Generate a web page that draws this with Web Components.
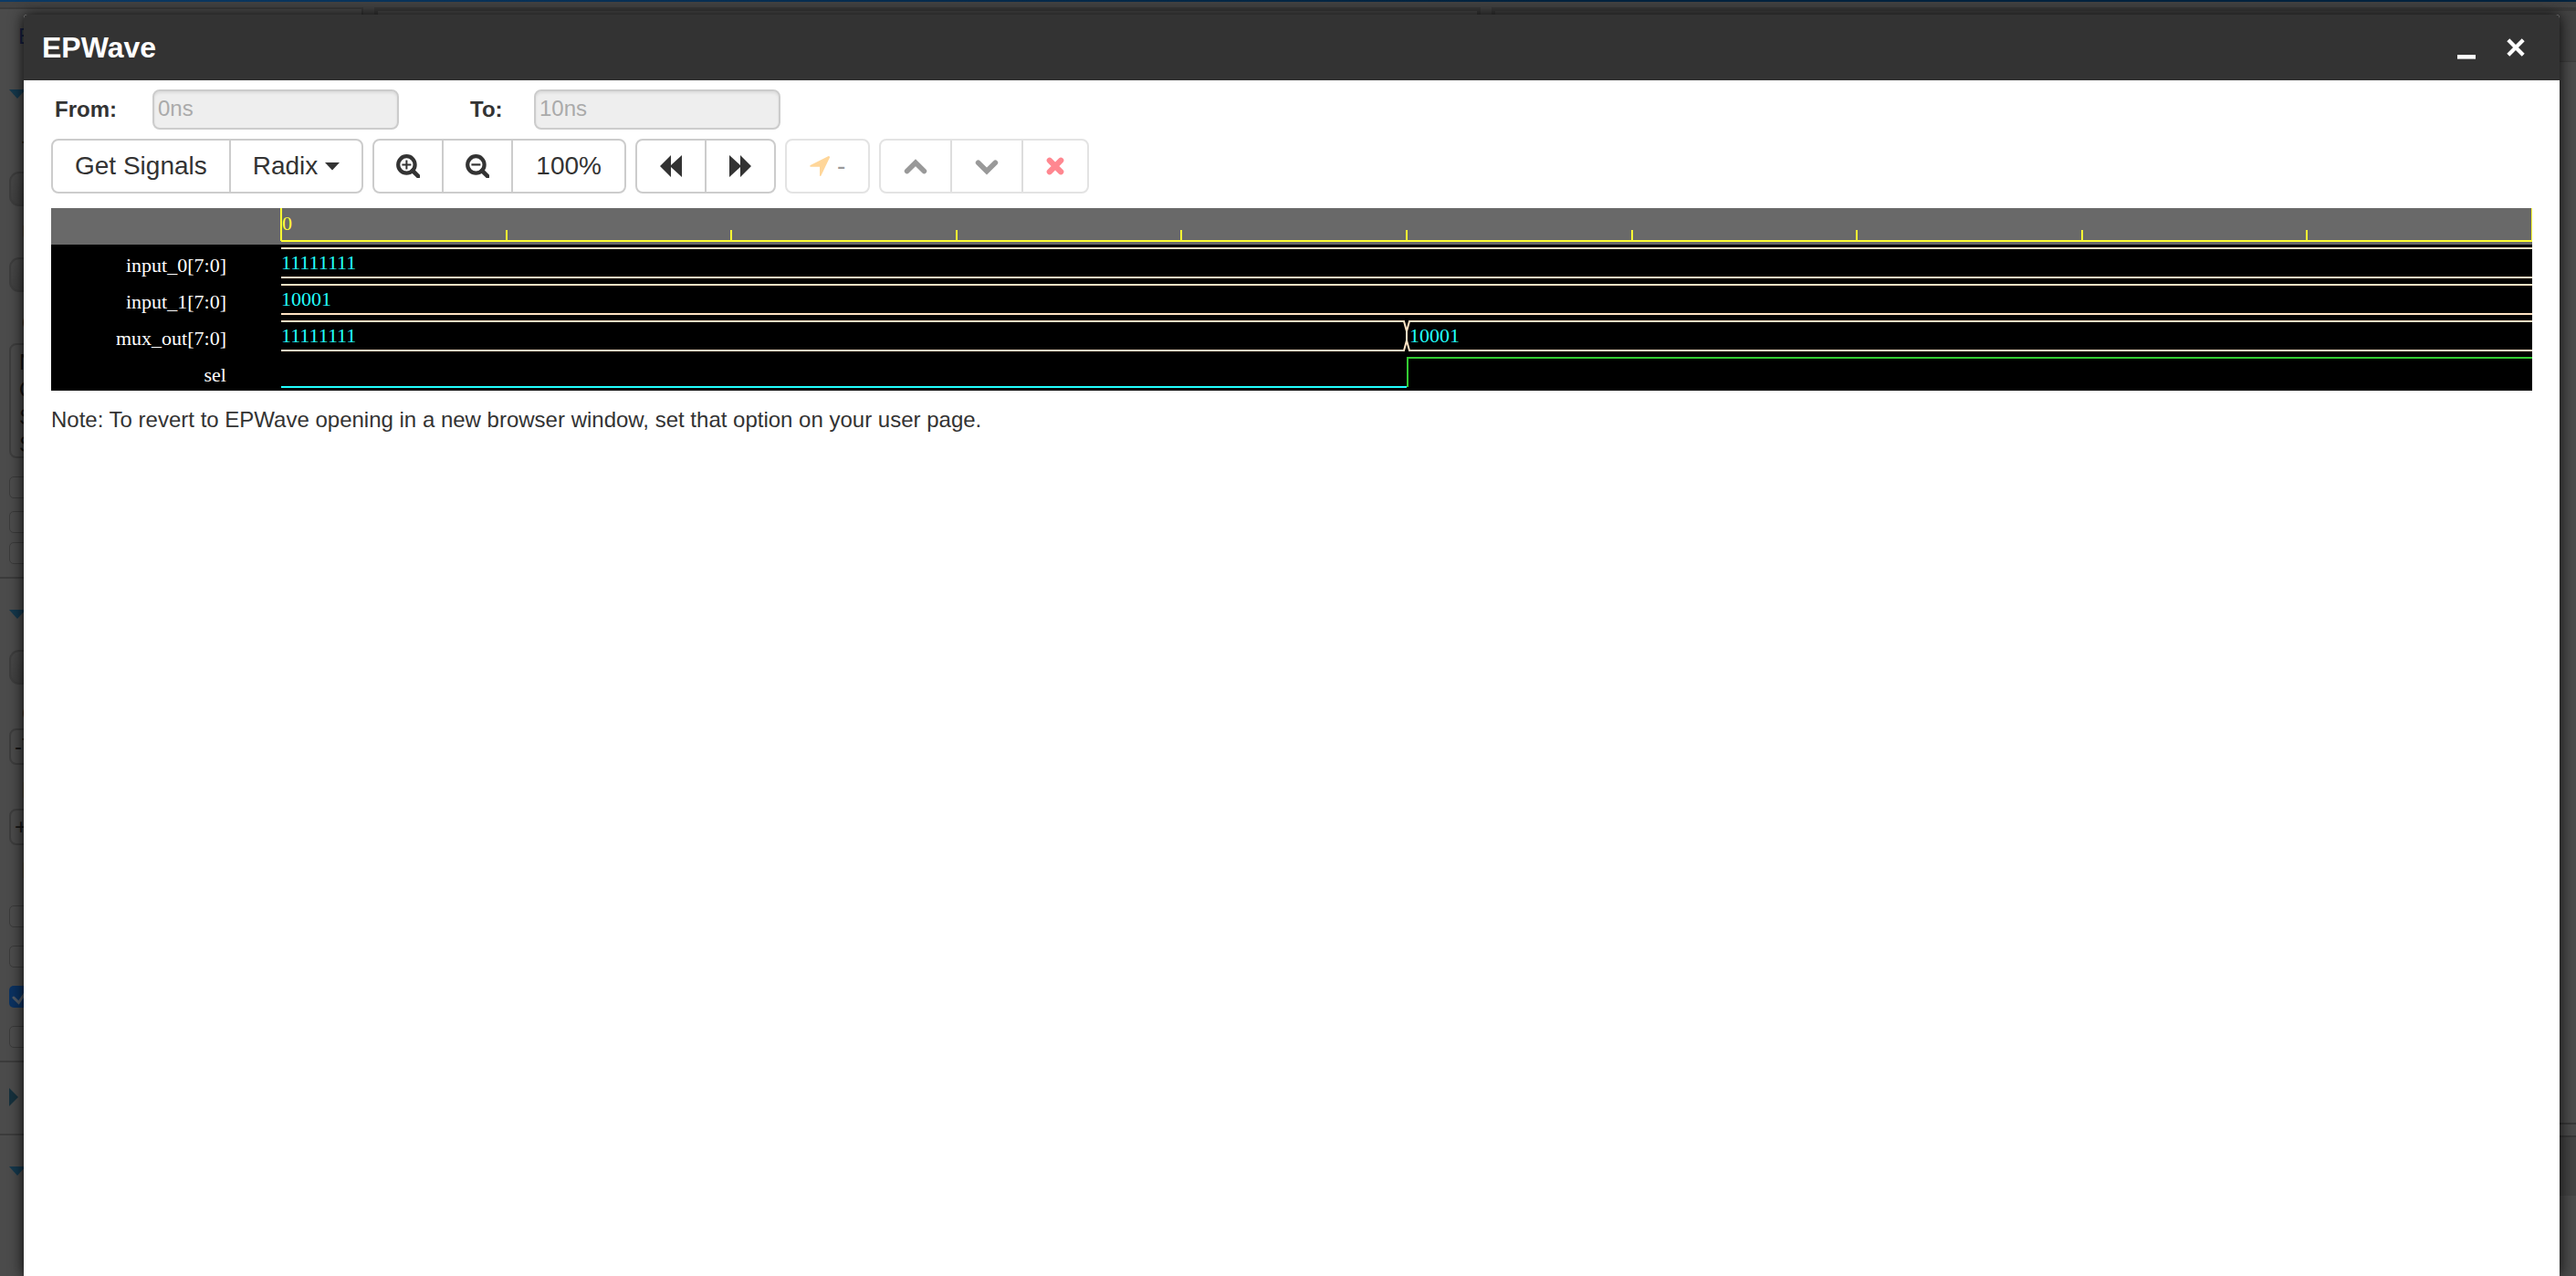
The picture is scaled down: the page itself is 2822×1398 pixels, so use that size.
<!DOCTYPE html>
<html lang="en">
<head>
<meta charset="utf-8">
<title>EPWave</title>
<style>
  body { margin: 0; background: #4b4b4b; color: #333; font: 24px/40px "Liberation Sans", Arial, sans-serif; }
</style>
</head>
<body>
<ep-app></ep-app>
<script>
const define = (name, html, setup) => customElements.define(name, class extends HTMLElement {
  connectedCallback() {
    if (this.shadowRoot) return;
    const root = this.attachShadow({ mode: 'open' });
    const t = document.createElement('template');
    t.innerHTML = '<style>*{box-sizing:border-box}</style>' + (typeof html === 'function' ? html(this) : html);
    root.append(t.content.cloneNode(true));
    if (setup) setup(this, root);
  }
});

/* ---------- icons ---------- */
const ICONS = {
  'zoom-in': [26, 26, '<circle cx="11.4" cy="11.4" r="9.2" fill="none" stroke="currentColor" stroke-width="4.2"/><path d="M18 18l6.2 6.2" stroke="currentColor" stroke-width="4.6" stroke-linecap="round"/><path d="M11.4 6.4v10M6.4 11.4h10" stroke="currentColor" stroke-width="2"/>'],
  'zoom-out': [26, 26, '<circle cx="11.4" cy="11.4" r="9.2" fill="none" stroke="currentColor" stroke-width="4.2"/><path d="M18 18l6.2 6.2" stroke="currentColor" stroke-width="4.6" stroke-linecap="round"/><path d="M6.4 11.4h10" stroke="currentColor" stroke-width="2.2"/>'],
  'backward': [26, 26, '<path d="M1 13L13 1v11L25 1v24L13 14v11z" fill="currentColor"/>'],
  'forward': [26, 26, '<path d="M25 13L13 1v11L1 1v24L13 14v11z" fill="currentColor"/>'],
  'locate': [22, 26, '<path d="M21.3 2.2Q22.3 2.6 21.9 3.8L12.4 23.4Q11.8 24.4 11 23.6V13.8L.7 13.7Q-.2 12.7.8 12L20.2 2.3Q20.8 2 21.3 2.2z" fill="currentColor"/>'],
  'up': [28, 26, '<path d="M4.6 18.6L14 9.2L23.4 18.6" fill="none" stroke="currentColor" stroke-width="5.6" stroke-linecap="round"/>'],
  'down': [28, 26, '<path d="M4.6 9.2L14 18.6L23.4 9.2" fill="none" stroke="currentColor" stroke-width="5.6" stroke-linecap="round"/>'],
  'remove': [22, 26, '<path d="M4.8 6.8L17.2 19.2M17.2 6.8L4.8 19.2" stroke="currentColor" stroke-width="6.2" stroke-linecap="round"/>'],
  'caret': [16, 26, '<path d="M0 9h16L8 17.6z" fill="currentColor"/>'],
  'minimize': [22, 32, '<rect x="1" y="24" width="20" height="4.6" fill="currentColor"/>'],
  'close': [22, 32, '<path d="M2.8 7.8L19.2 24.2M19.2 7.8L2.8 24.2" stroke="currentColor" stroke-width="4.2"/>']
};
define('ep-icon', el => {
  const [w, h, body] = ICONS[el.getAttribute('name')];
  return `<style>:host{display:block;flex:none}svg{display:block}</style>
    <svg width="${w}" height="${h}" viewBox="0 0 ${w} ${h}" aria-hidden="true">${body}</svg>`;
});

/* ---------- toolbar ---------- */
define('ep-group', el => `<style>
  :host{display:flex;height:60px;border:2px solid #ccc;border-radius:8px;background:#fff;--line:#ccc}
  :host([disabled]){border-color:#e3e3e3;--line:#ddd}
  </style><slot></slot>`);
define('ep-button', el => `<style>
  :host{display:flex}
  :host(:not(:first-child)){border-left:2px solid var(--line)}
  button{display:flex;align-items:center;gap:8px;padding:0 24px;border:0;background:none;color:#333;font:inherit;font-size:28px;line-height:40px;cursor:pointer}
  :host([wide]) button{padding:0 25px}
  button:disabled{color:#999;cursor:default}
  </style><button type="button" aria-label="${el.getAttribute('label')}" ${el.hasAttribute('disabled') ? 'disabled' : ''}><slot></slot></button>`);

define('ep-field', el => `<style>
  :host{display:flex;align-items:center}
  label{font-weight:bold;width:var(--label,107px)}
  input{width:270px;height:44px;padding:0 4px 2px;border:2px solid #ccc;border-radius:8px;background:#eee;color:#aaa;
    font:inherit;line-height:36px;box-shadow:inset 0 2px 3px rgba(0,0,0,.08)}
  </style><label for="f"><slot></slot></label><input id="f" type="text" disabled value="${el.getAttribute('value')}">`);

/* ---------- waveform ---------- */
define('ep-ruler', () => {
  let ticks = '';
  for (let i = 1; i < 10; i++) ticks += `<line x1="${i * 10}%" x2="${i * 10}%" y1="24" y2="36"/>`;
  return `<style>
    :host{display:flex;height:40px;padding-left:252px;background:#696969;overflow:hidden}
    svg{flex:1;min-width:0;height:40px;overflow:visible}
    text{font:22px "Liberation Serif",serif;fill:#ff3}
    </style><svg><g stroke="#ff3" stroke-width="2" shape-rendering="crispEdges">
    <line x1="0" x2="0" y1="0" y2="36"/><line x1="100%" x2="100%" y1="0" y2="36"/>
    <line x1="0" x2="100%" y1="36" y2="36"/>${ticks}</g><text x="1" y="24">0</text></svg>`;
});
define('ep-signal', el => {
  const vals = (el.getAttribute('values') || '').split(' ').filter(Boolean);
  let draw;
  if (el.hasAttribute('bit')) {
    draw = `<g stroke-width="2" shape-rendering="crispEdges"><line x1="0" x2="50%" y1="36" y2="36" stroke="#2ff"/>
      <line x1="50%" x2="100%" y1="4" y2="4" stroke="#3c3"/><svg x="50%"><line x1="1" x2="1" y1="3" y2="36" stroke="#3c3"/></svg></g>`;
  } else {
    draw = `<g stroke="#ffe4c4" stroke-width="2" shape-rendering="crispEdges"><line x1="0" x2="100%" y1="4" y2="4"/><line x1="0" x2="100%" y1="36" y2="36"/></g>`;
    if (vals.length > 1) draw += `<svg x="50%" overflow="visible"><rect x="-3" y="2" width="6" height="36"/>
      <path d="M-4 4h1L0 15V25L-3 36h-1M4 4h-1L0 15V25L3 36h1" fill="none" stroke="#ffe4c4" stroke-width="2"/></svg>`;
    vals.forEach((v, i) => draw += `<svg x="${i * 50}%" overflow="visible"><text x="${i ? 3 : 0}" y="27">${v}</text></svg>`);
  }
  return `<style>
    :host{display:flex;height:40px;background:#000;color:#fff;font:22px/40px "Liberation Serif",serif;overflow:hidden}
    span{width:252px;padding:3px 60px 0 0;text-align:right;flex:none}
    svg{flex:1;min-width:0;height:40px}
    text{fill:#2ff}
    </style><span><slot></slot></span><svg>${draw}</svg>`;
});

/* ---------- dialog ---------- */
define('ep-dialog', `<style>
  :host{display:flex;flex-direction:column;background:#fff;box-shadow:0 0 16px rgba(0,0,0,.9);border-radius:4px 4px 0 0}
  header{display:flex;align-items:center;height:72px;padding:0 37px 0 20px;background:#333;color:#fff;border-radius:4px 4px 0 0}
  h1{flex:1;margin:0;font-size:32px;line-height:40px}
  nav{display:flex;gap:32px}
  nav button{padding:0;border:0;background:none;color:#fff;cursor:pointer}
  main{padding:10px 30px 0}
  </style>
  <header><h1><slot name="title"></slot></h1><nav>
    <button type="button" aria-label="Minimize"><ep-icon name="minimize"></ep-icon></button>
    <button type="button" aria-label="Close"><ep-icon name="close"></ep-icon></button></nav></header>
  <main><slot></slot></main>`);

/* ---------- dimmed page behind the dialog ---------- */
define('ep-sidebar', `<style>
  :host{display:flex;flex-direction:column;align-items:flex-start;width:26px;padding-left:10px;overflow:hidden;white-space:nowrap;color:#151515;line-height:24px}
  :host>*, .t, .s, .k, .d, .r, hr, input, a, .list{flex:none}
  .t{margin-left:14px;height:24px}
  a{margin:18px 0 0 10px;height:24px;color:#151f42;text-decoration:none}
  .d{border:9px solid transparent;border-top:10px solid #15384c;border-bottom:0}
  .r{border:10px solid transparent;border-left:10px solid #15303c;border-right:0}
  .s{width:100px;height:38px;border:2px solid #3d3d3d;border-radius:11px;background:linear-gradient(#484848,#404040)}
  .list{width:100px;height:126px;padding:4px 9px;border:2px solid #3d3d3d;border-radius:8px;line-height:30px}
  input{margin:0;font:inherit;color:inherit}
  input[type=text]{width:100px;height:40px;border:2px solid #3d3d3d;border-radius:8px;background:none;padding:0 4px}
  input[type=checkbox]{appearance:none;width:24px;height:24px;border:1px solid #3a3a3a;border-radius:5px;background:#4c4c4c}
  input[type=checkbox]:checked{border:0;background:#0b3261}
  .c{display:grid;flex:none}.c>*{grid-area:1/1}
  hr{width:60px;height:2px;margin:0 0 0 -10px;border:0;background:#3b3b3b}
  </style>
  <a href="#">E</a>
  <i class="d" style="margin-top:46px"></i>
  <div class="t" style="margin-top:44px">T</div>
  <div class="s" style="margin-top:12px"></div>
  <div class="t" style="margin-top:18px">U</div>
  <div class="s" style="margin-top:14px"></div>
  <div class="t" style="margin-top:22px">O</div>
  <div class="list" style="margin-top:10px">N<br>O<br>S<br>S</div>
  <input type="checkbox" aria-label="Option 1" style="margin-top:20px">
  <input type="checkbox" aria-label="Option 2" style="margin-top:14px">
  <input type="checkbox" aria-label="Option 3" style="margin-top:10px">
  <hr style="margin-top:14px">
  <i class="d" style="margin-top:34px"></i>
  <div class="s" style="margin-top:34px"></div>
  <div class="t" style="margin-top:20px">C</div>
  <input type="text" aria-label="Compile options" value="-T" style="margin-top:4px">
  <div class="t" style="margin-top:16px">R</div>
  <input type="text" aria-label="Run options" value="+" style="margin-top:8px">
  <div class="t" style="margin-top:16px">R</div>
  <input type="checkbox" aria-label="Option 4" style="margin-top:26px">
  <input type="checkbox" aria-label="Option 5" style="margin-top:20px">
  <span class="c" style="margin-top:20px"><input type="checkbox" aria-label="Option 6" checked><svg width="24" height="24" aria-hidden="true"><path d="M5 13l5.500 5.500L19 6" fill="none" stroke="#555c66" stroke-width="3" stroke-linecap="round"/></svg></span>
  <input type="checkbox" aria-label="Option 7" style="margin-top:20px">
  <hr style="margin-top:14px">
  <i class="r" style="margin-top:28px"></i>
  <hr style="margin-top:30px">
  <i class="d" style="margin-top:34px"></i>`);

define('ep-backdrop', `<style>
  :host{display:flex;flex-direction:column;background:linear-gradient(90deg,#0b3a66,#04233f 60%)}
  .page{display:flex;gap:12px;flex:1;margin-top:2px;padding-top:6px;background:#434343}
  .side{flex:none;width:398px;border:2px solid #3a3a3a;border-width:2px 2px 0 0;background:#4b4b4b}
  .pane{flex:121;border:4px solid #3a3a3a;border-width:4px 4px 0;background:#4b4b4b}
  .last{flex:119;display:flex;flex-direction:column}
  .bar{height:56px;background:#434343;border-bottom:1px solid #3d3d3d}
  .code{height:1162px}
  .gap{height:16px;border:2px solid #373737;border-width:2px 0}
  .tabs{height:64px;background:#434343}
  .last{border-right:0}
  </style>
  <div class="page"><div class="side"><ep-sidebar></ep-sidebar></div><div class="pane"></div>
  <div class="pane last"><div class="bar"></div><div class="code"></div><div class="gap"></div><div class="tabs"></div></div></div>`);

define('ep-app', `<style>
  :host{display:grid;min-height:100vh}
  ep-backdrop,ep-dialog{grid-area:1/1;min-width:0}
  ep-dialog{margin:16px 18px 0 26px}
  .range{display:flex;gap:78px;padding-left:4px}
  .to{--label:70px}
  .tools{display:flex;gap:10px;margin-top:10px}
  .wave{margin-top:16px}
  .amber{color:#ffd699}.red{color:#ff8790}
  p{margin:12px 0 0}
  </style>
  <ep-backdrop></ep-backdrop>
  <ep-dialog><span slot="title">EPWave</span>
    <div class="range"><ep-field value="0ns">From:</ep-field><ep-field class="to" value="10ns">To:</ep-field></div>
    <div class="tools">
      <ep-group><ep-button label="Get Signals">Get Signals</ep-button><ep-button label="Radix">Radix<ep-icon name="caret"></ep-icon></ep-button></ep-group>
      <ep-group><ep-button label="Zoom in"><ep-icon name="zoom-in"></ep-icon></ep-button><ep-button label="Zoom out"><ep-icon name="zoom-out"></ep-icon></ep-button><ep-button label="100%" wide>100%</ep-button></ep-group>
      <ep-group><ep-button label="Back"><ep-icon name="backward"></ep-icon></ep-button><ep-button label="Forward"><ep-icon name="forward"></ep-icon></ep-button></ep-group>
      <ep-group disabled><ep-button label="Cursor" wide disabled><ep-icon class="amber" name="locate"></ep-icon>-</ep-button></ep-group>
      <ep-group disabled><ep-button label="Move up" disabled><ep-icon name="up"></ep-icon></ep-button><ep-button label="Move down" disabled><ep-icon name="down"></ep-icon></ep-button><ep-button label="Remove" disabled><ep-icon class="red" name="remove"></ep-icon></ep-button></ep-group>
    </div>
    <div class="wave">
      <ep-ruler></ep-ruler>
      <ep-signal values="11111111">input_0[7:0]</ep-signal>
      <ep-signal values="10001">input_1[7:0]</ep-signal>
      <ep-signal values="11111111 10001">mux_out[7:0]</ep-signal>
      <ep-signal bit>sel</ep-signal>
    </div>
    <p>Note: To revert to EPWave opening in a new browser window, set that option on your user page.</p>
  </ep-dialog>`);
</script>
</body>
</html>
